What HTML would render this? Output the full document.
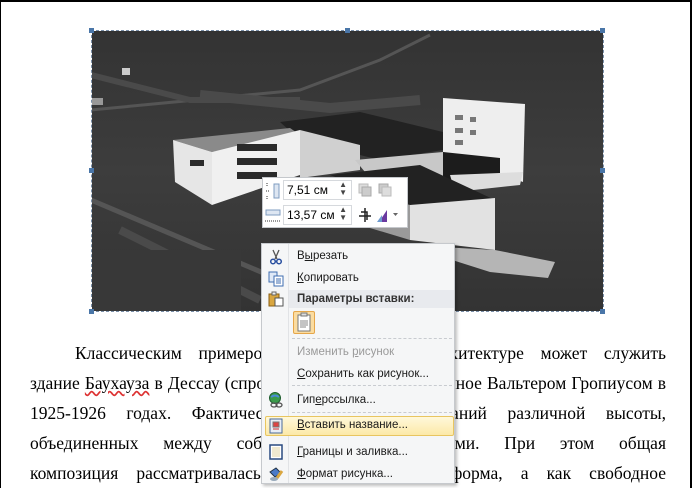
<!DOCTYPE html>
<html><head><meta charset="utf-8"><style>
*{margin:0;padding:0;box-sizing:border-box}
body{width:692px;height:488px;overflow:hidden;background:#fff;position:relative;font-family:"Liberation Serif","DejaVu Serif",serif}
.frame{position:absolute;left:0;top:0;width:692px;height:488px;border-top:2px solid #000;border-left:1px solid #000;border-right:2px solid #000}
.photo{position:absolute;left:91px;top:30px;width:513px;height:282px;border:1px dashed #7a8fa8;overflow:hidden}
.h{position:absolute;width:5px;height:5px;background:#4a76a8}
.txt{position:absolute;left:30px;width:636px;font-size:17.5px;line-height:30px;color:#000;text-align:justify;text-align-last:justify;white-space:nowrap}
.tb{position:absolute;left:262px;top:177px;width:146px;height:51px;background:#fff;border:1px solid #c5c8cc;font-family:"Liberation Sans",sans-serif;font-size:12px}
.fld{position:absolute;left:20px;width:69px;height:20px;border:1px solid #d6d9dd;background:#fff;padding:2px 0 0 3px}
.menu{position:absolute;left:261px;top:243px;width:194px;height:241px;background:#f5f6f7;border:1px solid #c6c9cd;box-shadow:2px 2px 3px rgba(0,0,0,.25);font-family:"Liberation Sans","DejaVu Sans",sans-serif;font-size:11.5px;color:#1a1a1a}
.col{position:absolute;left:26px;top:0;width:1px;height:100%;background:#e1e3e6}
.it{position:absolute;left:35px;white-space:nowrap}
.sep{position:absolute;left:30px;right:2px;height:0;border-top:1px dashed #c8cbd0}
.ic{position:absolute;left:6px;width:16px;height:16px}
</style></head><body>
<div class="frame"></div>
<div class="photo">
<svg width="513" height="282" viewBox="91 30 513 282" style="position:absolute;left:-1px;top:-1px">
<defs><linearGradient id="g" x1="0" y1="0" x2="0" y2="1"><stop offset="0" stop-color="#333"/><stop offset=".5" stop-color="#3d3d3d"/><stop offset="1" stop-color="#333"/></linearGradient></defs>
<rect x="91" y="30" width="513" height="282" fill="url(#g)"/>
<path d="M91 110 L300 90 L380 60 L430 35" stroke="#555" stroke-width="3" fill="none"/>
<path d="M91 75 L190 100 L300 100" stroke="#4a4a4a" stroke-width="6" fill="none"/>
<path d="M200 95 L330 108 L420 100" stroke="#4a4a4a" stroke-width="10" fill="none"/>
<path d="M91 200 L280 280 L330 312" stroke="#555" stroke-width="5" fill="none"/>
<path d="M120 230 L260 300" stroke="#4a4a4a" stroke-width="8" fill="none"/>
<rect x="91" y="250" width="150" height="62" fill="#383838"/>
<rect x="122" y="68" width="8" height="7" fill="#ccc"/>
<rect x="91" y="98" width="12" height="7" fill="#999"/>
<path d="M280 122 L360 112 L443 132 L443 150 L380 160 L300 140Z" fill="#222"/>
<path d="M173 140 L290 128 L300 135 L212 152Z" fill="#8a8a8a"/>
<path d="M173 140 L212 152 L212 205 L175 182Z" fill="#e6e6e6"/>
<path d="M212 152 L300 130 L300 175 L212 205Z" fill="#f0f0f0"/>
<g fill="#2a2a2a"><rect x="237" y="144" width="40" height="7"/><rect x="237" y="158" width="40" height="7"/><rect x="237" y="172" width="40" height="7"/><rect x="190" y="160" width="14" height="6"/></g>
<path d="M300 130 L360 145 L360 170 L300 178Z" fill="#d0d0d0"/>
<path d="M443 98 L525 104 L523 182 L443 152Z" fill="#eeeeee"/>
<g fill="#777"><rect x="455" y="115" width="8" height="5"/><rect x="470" y="117" width="6" height="5"/><rect x="455" y="128" width="8" height="5"/><rect x="470" y="130" width="6" height="5"/><rect x="455" y="140" width="8" height="5"/></g>
<path d="M355 160 L443 152 L443 180 L380 190Z" fill="#c8c8c8"/>
<path d="M443 152 L500 158 L500 180 L443 185Z" fill="#1c1c1c"/>
<path d="M450 175 L523 172 L520 185 L455 192Z" fill="#ddd"/>
<path d="M330 175 L420 165 L495 200 L410 205Z" fill="#222"/>
<path d="M410 205 L495 198 L495 250 L410 240Z" fill="#e2e2e2"/>
<path d="M405 245 L495 250 L555 262 L548 278 L490 272Z" fill="#b5b5b5"/>
<path d="M350 190 L410 205 L410 240 L360 225Z" fill="#9a9a9a"/>
</svg>
</div>
<div class="h" style="left:89px;top:28px"></div><div class="h" style="left:345px;top:28px"></div><div class="h" style="left:600px;top:28px"></div>
<div class="h" style="left:89px;top:168px"></div><div class="h" style="left:600px;top:168px"></div>
<div class="h" style="left:89px;top:309px"></div><div class="h" style="left:600px;top:309px"></div>

<div class="txt" style="top:338px;left:75px;width:591px">Классическим примером функциональной архитектуре может служить</div>
<div class="txt" style="top:368px">здание <span style="text-decoration:underline wavy #d33">Баухауза</span> в Дессау (спроектированное и построенное Вальтером Гропиусом в</div>
<div class="txt" style="top:398px">1925-1926 годах. Фактически это комплекс зданий различной высоты,</div>
<div class="txt" style="top:428px">объединенных между собой крытыми галереями. При этом общая</div>
<div class="txt" style="top:458px">композиция рассматривалась не как замкнутая форма, а как свободное</div>

<div class="tb">
<svg style="position:absolute;left:2px;top:4px" width="16" height="18"><path d="M2 1v3M2 14v3M1 9h4" stroke="#333" stroke-dasharray="1 1"/><rect x="9" y="2" width="5" height="14" fill="#dde6f2" stroke="#7f9cc0"/></svg>
<div class="fld" style="top:2px">7,51 см<span style="position:absolute;right:4px;top:0;font-size:8px;line-height:8px;color:#444">▲<br>▼</span></div>
<svg style="position:absolute;left:94px;top:4px" width="40" height="16"><rect x="2" y="2" width="9" height="9" fill="#ddd" stroke="#bbb"/><rect x="5" y="5" width="9" height="9" fill="#ccc" stroke="#aaa"/><rect x="22" y="2" width="9" height="9" fill="#ccc" stroke="#aaa"/><rect x="25" y="5" width="9" height="9" fill="#ddd" stroke="#bbb"/></svg>
<div class="fld" style="top:27px">13,57 см<span style="position:absolute;right:4px;top:0;font-size:8px;line-height:8px;color:#444">▲<br>▼</span></div>
<svg style="position:absolute;left:1px;top:29px" width="18" height="18"><rect x="2" y="3" width="14" height="5" fill="#dde6f2" stroke="#7f9cc0"/><path d="M1 14h16" stroke="#333" stroke-dasharray="1 1"/></svg>
<svg style="position:absolute;left:94px;top:29px" width="46" height="18"><path d="M8 1v14M2 9h12M4 5h6v8" stroke="#222" stroke-width="1.5" fill="none"/><path d="M22 15l8-12v12z" fill="#6a3aa0"/><path d="M20 15l5-7v7z" fill="#6e9bd0"/><path d="M36 6h5l-2.5 3z" fill="#666"/></svg>
</div>

<div class="menu">
<div class="col"></div>
<div style="position:absolute;left:27px;top:46px;width:165px;height:18px;background:#e8eaee"></div>
<svg class="ic" style="top:5px" viewBox="0 0 16 16"><path d="M5 1l4 9M11 1l-4 9" stroke="#555" stroke-width="1.3"/><circle cx="5" cy="12.5" r="2.3" fill="none" stroke="#2a50a0" stroke-width="1.5"/><circle cx="11" cy="12.5" r="2.3" fill="none" stroke="#2a50a0" stroke-width="1.5"/></svg>
<div class="it" style="top:6px">В<u>ы</u>резать</div>
<svg class="ic" style="top:27px" viewBox="0 0 16 16"><rect x="1" y="1" width="8" height="10" fill="#dfe9f7" stroke="#3f6db0"/><rect x="6" y="5" width="9" height="10" fill="#fff" stroke="#3f6db0"/><path d="M8 8h5M8 10h5M8 12h5" stroke="#3f6db0"/></svg>
<div class="it" style="top:28px"><u>К</u>опировать</div>
<svg class="ic" style="top:47px" viewBox="0 0 16 16"><rect x="1" y="3" width="10" height="12" fill="#d9a640" stroke="#8a5f10"/><rect x="4" y="1" width="4" height="3" fill="#eee" stroke="#666"/><rect x="7" y="7" width="8" height="8" fill="#fff" stroke="#555"/></svg>
<div class="it" style="top:49px;font-weight:bold;color:#333">Параметры вставки:</div>
<div style="position:absolute;left:31px;top:67px;width:22px;height:23px;background:#fbdca0;border:1px solid #e5a64a;border-radius:2px"><svg width="20" height="21" viewBox="0 0 20 21"><rect x="4" y="3" width="12" height="16" fill="#fff" stroke="#777"/><rect x="7" y="1" width="6" height="3" fill="#ddd" stroke="#777"/><path d="M6 9h8M6 11h8M6 13h8M6 15h6" stroke="#888"/></svg></div>
<div class="sep" style="top:94px"></div>
<div class="it" style="top:102px;color:#9a9a9a">Изменить <u>р</u>исунок</div>
<div class="it" style="top:124px"><u>С</u>охранить как рисунок...</div>
<div class="sep" style="top:141px"></div>
<svg class="ic" style="top:148px" viewBox="0 0 16 16"><circle cx="7" cy="6" r="5.5" fill="#3a9a4a" stroke="#1e5e2e"/><path d="M3 5q4-3 8 0" stroke="#4a8ad8" stroke-width="2" fill="none"/><ellipse cx="6" cy="13" rx="3" ry="2" fill="none" stroke="#555" stroke-width="1.3"/><ellipse cx="11" cy="13" rx="3" ry="2" fill="none" stroke="#555" stroke-width="1.3"/></svg>
<div class="it" style="top:150px">Гип<u>е</u>рссылка...</div>
<div class="sep" style="top:168px"></div>
<div style="position:absolute;left:3px;top:172px;width:189px;height:20px;border:1px solid #e8c560;border-radius:2px;background:linear-gradient(#fff8da,#fce9a8)"></div>
<svg class="ic" style="top:174px" viewBox="0 0 16 16"><rect x="2" y="1" width="12" height="14" fill="#e9eef5" stroke="#4a6a9a"/><rect x="5" y="4" width="6" height="5" fill="#d44" stroke="#777"/><path d="M5 11h6" stroke="#c33"/></svg>
<div class="it" style="top:175px"><u>В</u>ставить название...</div>
<svg class="ic" style="top:200px" viewBox="0 0 16 16"><rect x="2" y="1" width="12" height="14" fill="#fff" stroke="#2a4a80" stroke-width="1.5"/><rect x="4" y="3" width="8" height="10" fill="#f0e9d0"/></svg>
<div class="it" style="top:202px"><u>Г</u>раницы и заливка...</div>
<svg class="ic" style="top:222px" viewBox="0 0 16 16"><path d="M2 6l6-4 5 5-6 4z" fill="#4a7ac8" stroke="#234"/><path d="M9 12l5-7" stroke="#d9a640" stroke-width="3"/><ellipse cx="6" cy="13" rx="4" ry="2" fill="#9ab" /></svg>
<div class="it" style="top:224px"><u>Ф</u>ормат рисунка...</div>
</div>
</body></html>
